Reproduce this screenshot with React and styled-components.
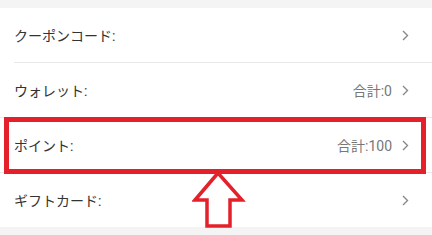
import styled, {createGlobalStyle} from "styled-components";

const GlobalStyle = createGlobalStyle`
    html, body {
        margin: 0;
        padding: 0;
        background: #f4f4f4;
        font-family: Roboto, "Noto Sans CJK JP", sans-serif;
    }
`;

const Page = styled.div`
    position: relative;
    width: 432px;
    height: 235px;
    padding-top: 8px;
    box-sizing: border-box;
    background: #f4f4f4;
    overflow: hidden;
`;

const List = styled.ul`
    list-style: none;
    margin: 0;
    padding: 0;
    background: #fff;
`;

const Row = styled.li`
    position: relative;
    display: flex;
    align-items: center;
    height: 54px;
    padding: 0 23px 0 14px;
    border-top: ${({divider}) => (divider === "full" ? "1px solid #e9e9e9" : "none")};
    margin-top: ${({divider}) => (divider === "inset" ? "1px" : "0")};
    &::before {
        content: "";
        display: ${({divider}) => (divider === "inset" ? "block" : "none")};
        position: absolute;
        left: 14px;
        right: 0;
        top: -1px;
        height: 1px;
        background: #e9e9e9;
    }
    &::after {
        content: "";
        display: ${({highlight}) => (highlight ? "block" : "none")};
        position: absolute;
        z-index: 1;
        left: 4px;
        right: 6px;
        top: -1px;
        bottom: -2px;
        border: 5px solid #e4202b;
        pointer-events: none;
    }
`;

const Label = styled.span`
    flex: 1;
    font-size: 14px;
    color: #333;
`;

const Total = styled.span`
    font-size: 14px;
    color: #777;
    margin-right: 10px;
`;

const Chevron = () => (
    <svg width="7" height="11" viewBox="0 0 7 11" fill="none">
        <path d="M1 1l4.5 4.5L1 10" stroke="#888" strokeWidth="1.4" />
    </svg>
);

const Arrow = styled.svg`
    position: absolute;
    z-index: 2;
    left: 192px;
    top: 171px;
`;

const items = [
    {label: "クーポンコード:", divider: "none"},
    {label: "ウォレット:", total: "合計:0", divider: "inset"},
    {label: "ポイント:", total: "合計:100", divider: "full", highlight: true},
    {label: "ギフトカード:", divider: "full"},
];

const App = () => {
    return (
        <Page>
            <GlobalStyle />
            <List>
                {items.map(el => (
                    <Row
                        key={el.label}
                        divider={el.divider}
                        highlight={el.highlight}
                    >
                        <Label>{el.label}</Label>
                        {el.total && <Total>{el.total}</Total>}
                        <Chevron />
                    </Row>
                ))}
            </List>
            <Arrow width="54" height="58" viewBox="0 0 54 58">
                <path
                    d="M26 2L3 29H15V55H38V29H50Z"
                    fill="#fff"
                    stroke="#e4202b"
                    strokeWidth="3.5"
                    strokeLinejoin="miter"
                />
            </Arrow>
        </Page>
    );
};

export default App;
